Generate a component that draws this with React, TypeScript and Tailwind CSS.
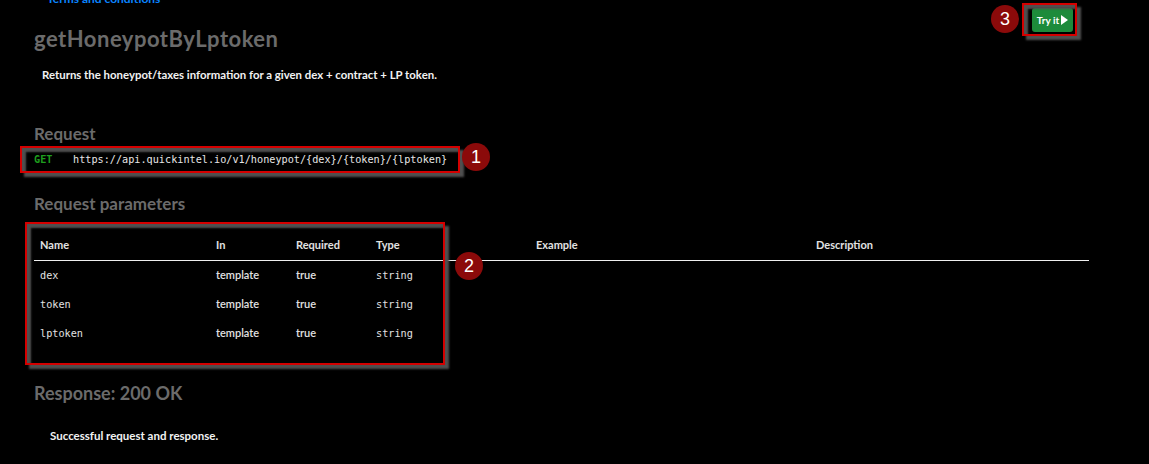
import type { ReactNode } from 'react'

const PARAMS = [
    { name: 'dex', in: 'template', required: 'true', type: 'string' },
    { name: 'token', in: 'template', required: 'true', type: 'string' },
    { name: 'lptoken', in: 'template', required: 'true', type: 'string' },
]

const MONO = "font-['DejaVu_Sans_Mono','Liberation_Mono',monospace]"

function Marker({ n, className }: { n: number; className: string }) {
    return (
        <div
            className={`absolute flex h-[28px] w-[28px] items-center justify-center rounded-full bg-[#8b0a0a] font-['Liberation_Sans',sans-serif] text-[18px] leading-none text-white ${className}`}
        >
            {n}
        </div>
    )
}

function Frame({ className }: { className: string }) {
    return (
        <div
            className={`pointer-events-none absolute border-2 border-[#d40000] shadow-[4px_4px_2px_#4f4f4f,inset_4px_4px_2px_#4f4f4f] ${className}`}
        />
    )
}

function Cell({ children, className = '' }: { children: ReactNode; className?: string }) {
    return <div className={`flex items-center pl-[6px] ${className}`}>{children}</div>
}

export default function App() {
    return (
        <div className="relative h-[464px] w-full overflow-hidden bg-black font-['Lato',sans-serif]">
            <div className="pl-[34px]">
                <a className="mt-[-8px] block pl-[13px] text-[12px] font-bold leading-[14px] text-[#0a84ff]">
                    Terms and conditions
                </a>
                <h1 className="mt-[20px] text-[22px] font-bold leading-[26px] tracking-[0.5px] text-[#6b6b6b]">
                    getHoneypotByLptoken
                </h1>
                <p className="mt-[16px] pl-[8px] text-[11.4px] font-bold leading-[14px] text-[#f2f2f2]">
                    Returns the honeypot/taxes information for a given dex + contract + LP token.
                </p>

                <h2 className="mt-[42px] text-[17px] font-bold leading-[20px] text-[#6b6b6b]">Request</h2>
                <div className={`mt-[2px] flex h-[27px] items-center ${MONO} text-[10.2px]`}>
                    <span className="w-[39px] font-bold text-[#1e9e1e]">GET</span>
                    <span className="text-[#e6e6e6]">https://api.quickintel.io/v1/honeypot/{'{dex}'}/{'{token}'}/{'{lptoken}'}</span>
                </div>

                <h2 className="mt-[21px] text-[17px] font-bold leading-[20px] text-[#6b6b6b]">
                    Request parameters
                </h2>
                <div className="mt-[17px] w-[1055px] text-[11px] text-[#e2e2e2]">
                    <div className="grid h-[30px] grid-cols-[176px_80px_80px_160px_280px_1fr] border-b border-[#f0f0f0] font-bold">
                        <Cell>Name</Cell>
                        <Cell>In</Cell>
                        <Cell>Required</Cell>
                        <Cell>Type</Cell>
                        <Cell>Example</Cell>
                        <Cell>Description</Cell>
                    </div>
                    {PARAMS.map((p) => (
                        <div key={p.name} className="grid h-[29px] grid-cols-[176px_80px_80px_160px_280px_1fr]">
                            <Cell className={`${MONO} text-[10.2px]`}>{p.name}</Cell>
                            <Cell className="font-semibold">{p.in}</Cell>
                            <Cell className="font-semibold">{p.required}</Cell>
                            <Cell className={`${MONO} text-[10.2px]`}>{p.type}</Cell>
                            <Cell>{''}</Cell>
                            <Cell>{''}</Cell>
                        </div>
                    ))}
                </div>

                <h2 className="mt-[35px] text-[18px] font-bold leading-[21px] text-[#6b6b6b]">Response: 200 OK</h2>
                <p className="mt-[25px] pl-[16px] text-[11.5px] font-bold leading-[14px] text-[#f2f2f2]">
                    Successful request and response.
                </p>
            </div>

            <button className="absolute left-[1032px] top-[8px] flex h-[24px] w-[41px] items-center justify-center gap-[2px] rounded-[3px] bg-[#1d8b3b] text-[10px] font-bold text-white">
                Try it
                <svg width="7" height="10" viewBox="0 0 7 10">
                    <path d="M0 0L7 5L0 10Z" fill="white" />
                </svg>
            </button>

            <Frame className="left-[20px] top-[146px] h-[27px] w-[440px]" />
            <Frame className="left-[25px] top-[222px] h-[143px] w-[420px]" />
            <Frame className="left-[1022px] top-[3px] h-[33px] w-[55px]" />

            <Marker n={1} className="left-[462px] top-[143px]" />
            <Marker n={2} className="left-[455px] top-[252px]" />
            <Marker n={3} className="left-[991px] top-[5px]" />
        </div>
    )
}
